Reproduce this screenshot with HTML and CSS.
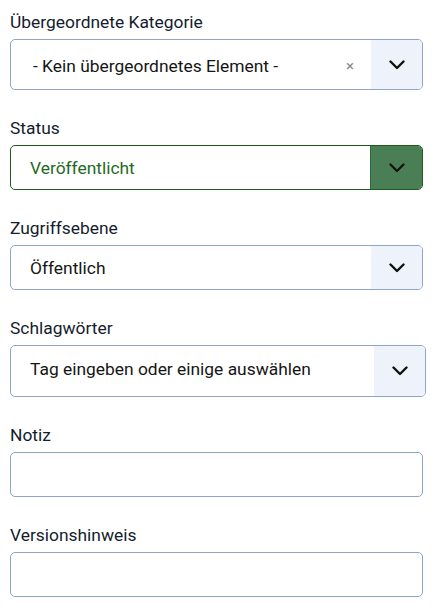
FILE: index.html
```html
<!DOCTYPE html>
<html lang="de">
<head>
<meta charset="utf-8">
<link rel="stylesheet" href="styles.css">
</head>
<body>
<form class="form">
  <div class="field">
    <label class="label">Übergeordnete Kategorie</label>
    <div class="select select--tall">
      <span class="value value--indent">- Kein übergeordnetes Element -</span>
      <span class="clear">×</span>
      <span class="toggle"><svg class="chev" viewBox="0 0 16 10" width="16" height="10"><path d="M1.5 1.5 L8 8 L14.5 1.5" fill="none" stroke="#111" stroke-width="2.4" stroke-linecap="round" stroke-linejoin="round"/></svg></span>
    </div>
  </div>
  <div class="field">
    <label class="label">Status</label>
    <div class="select select--green">
      <span class="value">Veröffentlicht</span>
      <span class="toggle toggle--green"><svg class="chev" viewBox="0 0 16 10" width="16" height="10"><path d="M1.5 1.5 L8 8 L14.5 1.5" fill="none" stroke="#111" stroke-width="2.2" stroke-linecap="round" stroke-linejoin="round"/></svg></span>
    </div>
  </div>
  <div class="field">
    <label class="label">Zugriffsebene</label>
    <div class="select">
      <span class="value">Öffentlich</span>
      <span class="toggle"><svg class="chev" viewBox="0 0 16 10" width="16" height="10"><path d="M1.5 1.5 L8 8 L14.5 1.5" fill="none" stroke="#111" stroke-width="2.4" stroke-linecap="round" stroke-linejoin="round"/></svg></span>
    </div>
  </div>
  <div class="field">
    <label class="label">Schlagwörter</label>
    <div class="select select--tall select--wide">
      <span class="value value--up">Tag eingeben oder einige auswählen</span>
      <span class="toggle"><svg class="chev" viewBox="0 0 16 10" width="16" height="10"><path d="M1.5 1.5 L8 8 L14.5 1.5" fill="none" stroke="#111" stroke-width="2.4" stroke-linecap="round" stroke-linejoin="round"/></svg></span>
    </div>
  </div>
  <div class="field">
    <label class="label">Notiz</label>
    <input class="input" type="text">
  </div>
  <div class="field">
    <label class="label">Versionshinweis</label>
    <input class="input" type="text">
  </div>
</form>
</body>
</html>
```
FILE: styles.css
```css
html, body {
  margin: 0;
  padding: 0;
  background: #fff;
}
body {
  font-family: Roboto, "Noto Sans", Arial, sans-serif;
  color: #141c2e;
}
.form {
  display: flex;
  flex-direction: column;
  gap: 26px;
  padding: 10px 12px 0 10px;
}
.field {
  display: flex;
  flex-direction: column;
  gap: 5px;
}
.label {
  font-size: 17.4px;
  line-height: 24px;
  color: #141c2e;
}
.select {
  box-sizing: border-box;
  display: flex;
  align-items: stretch;
  height: 45px;
  border: 1px solid #8ea5c9;
  border-radius: 5px;
  overflow: hidden;
  background: #fff;
  width: 413px;
}
.select--tall {
  height: 51px;
}
.select--wide {
  width: 416px;
  height: 52px;
}
.value {
  flex: 1;
  display: flex;
  align-items: center;
  padding-left: 19px;
  padding-top: 1px;
  font-size: 17.4px;
  color: #151515;
  white-space: nowrap;
}
.value--indent {
  padding-left: 22px;
  padding-top: 2px;
}
.value--up {
  padding-top: 0;
  padding-bottom: 4px;
}
.clear {
  display: flex;
  align-items: center;
  padding-right: 17px;
  padding-top: 3px;
  font-size: 15px;
  color: #8a8a8a;
}
.toggle {
  width: 51px;
  display: flex;
  align-items: center;
  justify-content: center;
  background: #eef2fa;
}
.select--green {
  border-color: #1f5a1f;
}
.select--green .value {
  color: #1f6a25;
}
.toggle--green {
  background: #4a7f55;
  border-left: 1px solid #2f6a3a;
}
.chev {
  display: block;
}
.input {
  box-sizing: border-box;
  display: block;
  width: 413px;
  height: 45px;
  margin: 0;
  border: 1px solid #8ea5c9;
  border-radius: 5px;
  background: #fff;
  font: inherit;
  padding: 0 12px;
}
```
